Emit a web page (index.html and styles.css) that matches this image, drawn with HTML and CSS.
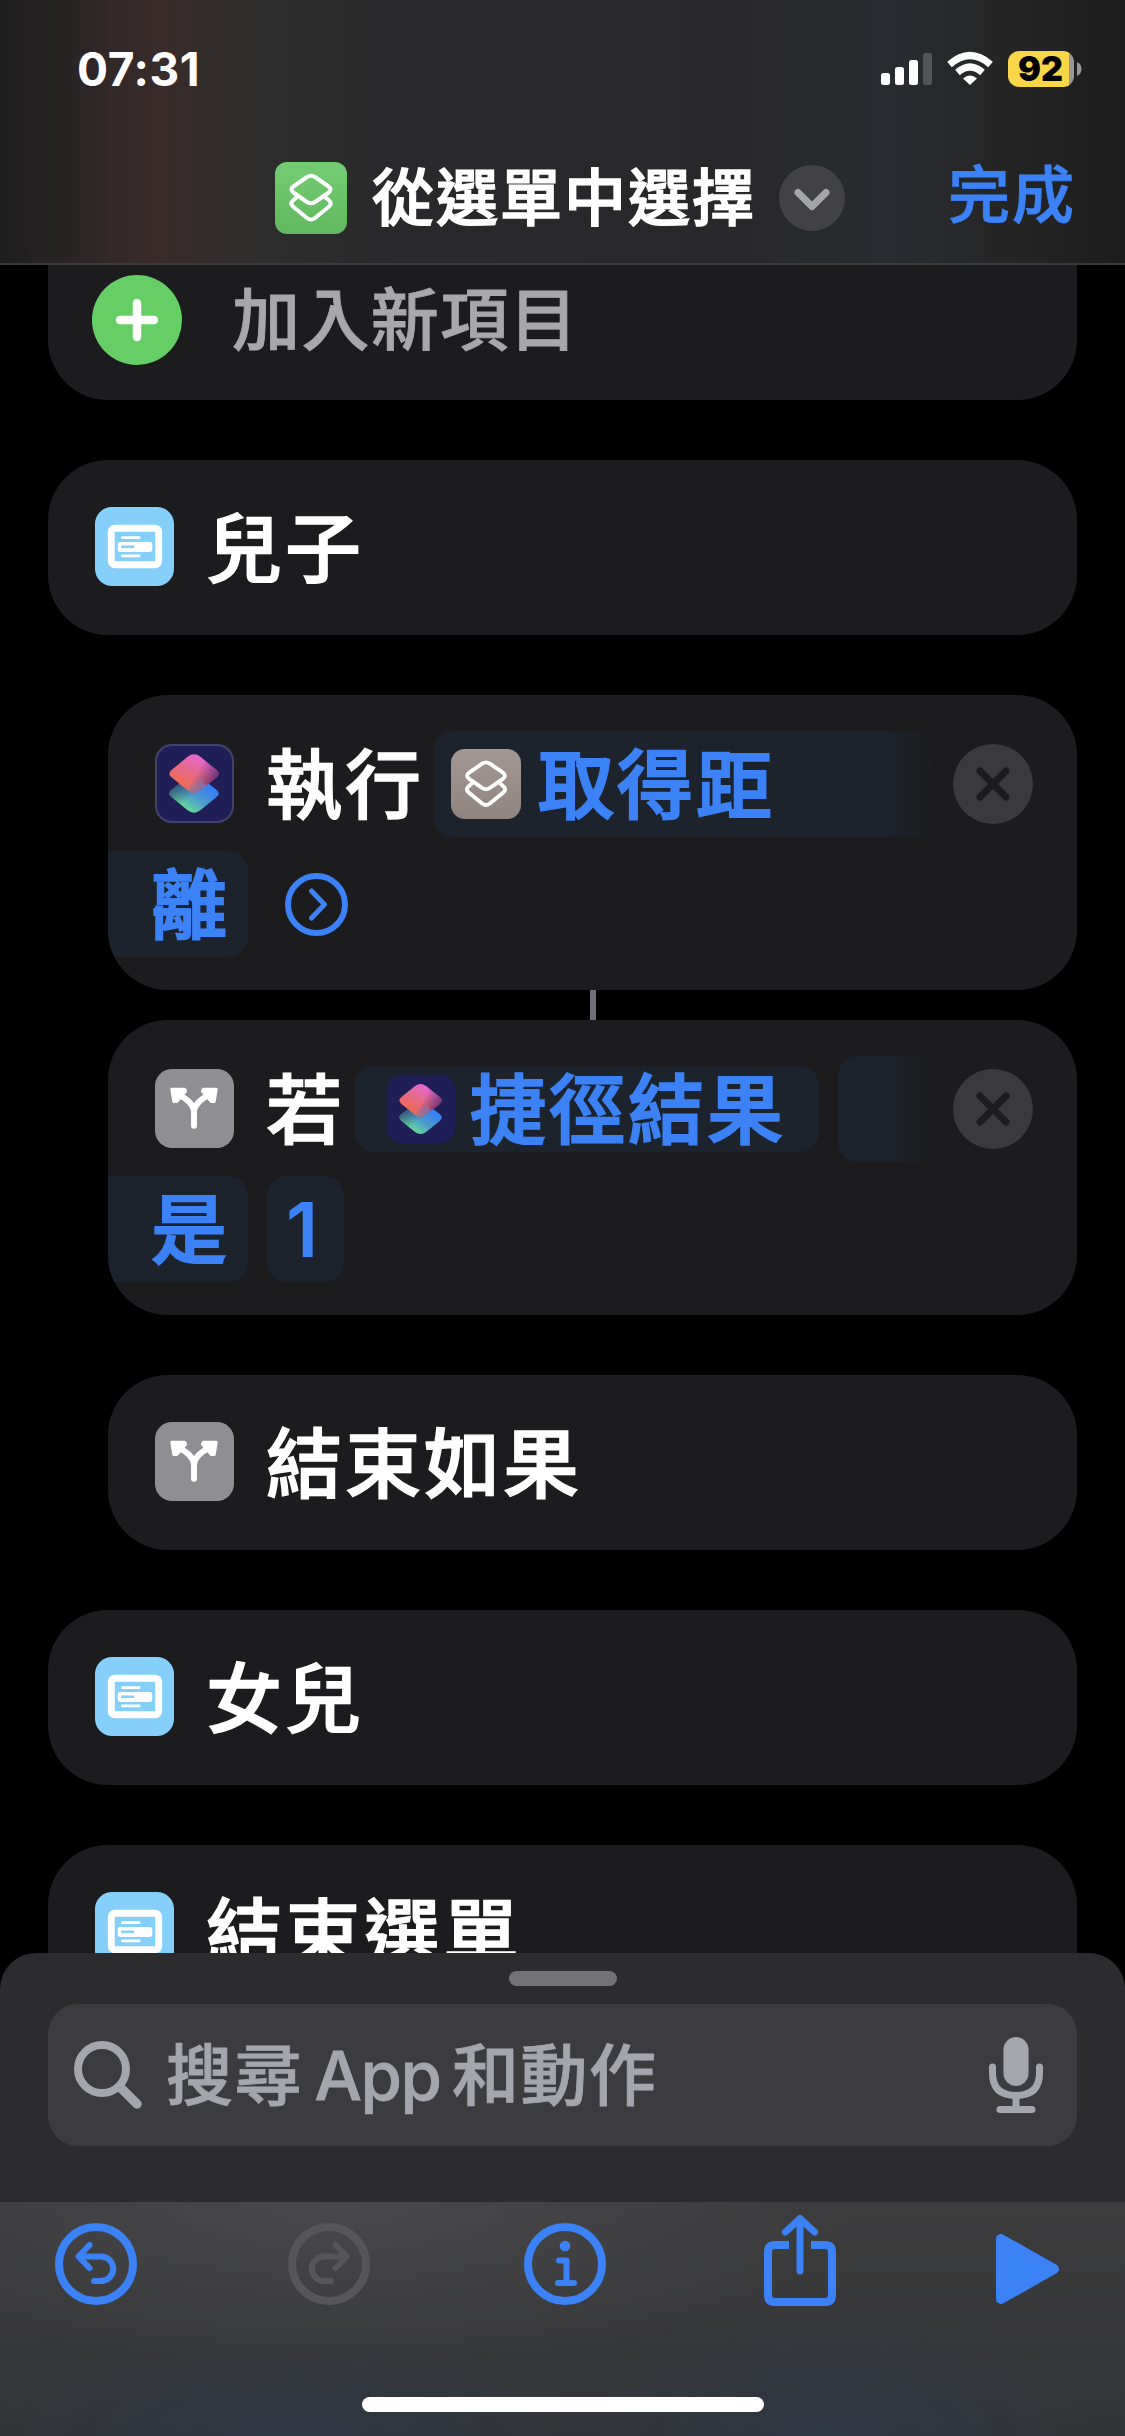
FILE: index.html
```html
<!DOCTYPE html>
<html lang="zh-Hant">
<head>
    <meta charset="UTF-8">
    <meta name="viewport" content="width=device-width, initial-scale=1.0">
    <title>從選單中選擇</title>
    <link rel="stylesheet" href="styles.css">
</head>
<body>
    <!-- shared icons -->
    <svg class="defs" width="0" height="0">
        <defs>
            <linearGradient id="pink" gradientUnits="userSpaceOnUse" x1="46" y1="10" x2="30" y2="44">
                <stop offset="0" stop-color="#e468dc"/>
                <stop offset="0.55" stop-color="#e66a86"/>
                <stop offset="1" stop-color="#f06a50"/>
            </linearGradient>
            <linearGradient id="shade" gradientUnits="userSpaceOnUse" x1="44" y1="26" x2="62" y2="36">
                <stop offset="0" stop-color="#5c2a6c" stop-opacity="0"/>
                <stop offset="1" stop-color="#5c2a6c" stop-opacity="0.85"/>
            </linearGradient>
            <linearGradient id="tip" gradientUnits="userSpaceOnUse" x1="38" y1="36" x2="47" y2="48">
                <stop offset="0" stop-color="#7a86c0" stop-opacity="0"/>
                <stop offset="1" stop-color="#6a88d0" stop-opacity="0.8"/>
            </linearGradient>
            <linearGradient id="blue" gradientUnits="userSpaceOnUse" x1="54" y1="44" x2="36" y2="70">
                <stop offset="0" stop-color="#3580f4"/>
                <stop offset="0.5" stop-color="#4c9ccc"/>
                <stop offset="1" stop-color="#68da98"/>
            </linearGradient>
            <linearGradient id="shade2" gradientUnits="userSpaceOnUse" x1="34" y1="56" x2="22" y2="40">
                <stop offset="0" stop-color="#2c4668" stop-opacity="0"/>
                <stop offset="1" stop-color="#2c4668" stop-opacity="0.85"/>
            </linearGradient>
        </defs>
        <symbol id="layers" viewBox="0 0 72 72">
            <g fill="none" stroke="#fff" stroke-width="4" stroke-linejoin="round">
                <path d="M32 15 L19 24 Q14 27.500 19 31 L32 40 Q36 42.500 40 40 L53 31 Q58 27.500 53 24 L40 15 Q36 12.500 32 15Z"/>
                <path d="M22 35 L18.500 38 Q14 41.500 18.500 45 L32 56 Q36 59 40 56 L53.500 45 Q58 41.500 53.500 38 L50 35"/>
            </g>
        </symbol>
        <symbol id="shortcuts" viewBox="0 0 80 80">
            <path id="low" d="M33 34 Q39.500 29 46 34 L62 46 Q67 50 62 54 L46 67 Q39.500 72 33 67 L17 54 Q12 50 17 46Z" fill="url(#blue)"/>
            <path d="M33 34 Q39.500 29 46 34 L62 46 Q67 50 62 54 L46 67 Q39.500 72 33 67 L17 54 Q12 50 17 46Z" fill="url(#shade2)"/>
            <path d="M33 13 Q39.500 8 46 13 L62 26 Q67 30 62 34 L46 47 Q39.500 52 33 47 L17 34 Q12 30 17 26Z" fill="url(#pink)"/>
            <path d="M33 13 Q39.500 8 46 13 L62 26 Q67 30 62 34 L46 47 Q39.500 52 33 47 L17 34 Q12 30 17 26Z" fill="url(#shade)"/>
            <path d="M46 47 Q39.500 52 33 47 L28 43 L46 34 L52 42Z" fill="url(#tip)"/>
        </symbol>
        <symbol id="menu" viewBox="0 0 80 80">
            <rect x="16.500" y="21.500" width="48" height="37" rx="3.500" fill="none" stroke="#fff" stroke-width="7"/>
            <rect x="26.500" y="29.500" width="19.500" height="3" rx="1" fill="#fff"/>
            <rect x="23" y="35.500" width="35" height="10" rx="2.500" fill="#fff"/>
            <rect x="26.500" y="39" width="13" height="2.600" fill="#84d0fb"/>
            <rect x="26.500" y="48" width="19.500" height="3" rx="1" fill="#fff"/>
        </symbol>
        <symbol id="branch" viewBox="0 0 80 80">
            <path d="M39.500 57.500V43Q39 34 24 26M39.500 43Q40 34 55 26" fill="none" stroke="#fff" stroke-width="6" stroke-linecap="round"/>
            <path d="M17 20.500L30 20.500L31 22.500L22 33L19 33Z M62 20.500L49 20.500L48 22.500L57 33L60 33Z" fill="#fff" stroke="#fff" stroke-width="3" stroke-linejoin="round"/>
        </symbol>
        <symbol id="cross" viewBox="0 0 80 80">
            <circle cx="40" cy="40" r="40" fill="#3a3a3d"/>
            <path d="M27 27L53 53M53 27L27 53" stroke="#1c1c1e" stroke-width="7" stroke-linecap="round"/>
        </symbol>
    </svg>

    <div class="phone">
        <header class="top">
            <div class="status">
                <span class="time">07:31</span>
                <div class="status-icons">
                    <svg width="52" height="36" viewBox="0 0 52 36">
                        <g fill="#fff">
                            <rect x="0" y="22" width="9" height="12" rx="2.500"/>
                            <rect x="14" y="16" width="9" height="18" rx="2.500"/>
                            <rect x="28" y="9" width="9" height="25" rx="2.500"/>
                            <rect x="42" y="2" width="9" height="32" rx="2.500" fill="#545458"/>
                        </g>
                    </svg>
                    <svg class="wifi" width="46" height="36" viewBox="0 0 46 36">
                        <g fill="none" stroke="#fff" stroke-width="7">
                            <path d="M2.500 13.500Q23 -4.500 43.500 13.500"/>
                            <path d="M10.500 21.500Q23 10.500 35.500 21.500"/>
                        </g>
                        <path d="M16 27.500Q23 21.500 30 27.500L23 34Z" fill="#fff"/>
                    </svg>
                    <div class="battery">92</div>
                    <svg width="5" height="14" viewBox="0 0 5 14"><path d="M0 0Q4.500 2 4.500 7T0 14Z" fill="#98989a"/></svg>
                </div>
            </div>
            <div class="nav">
                <svg class="title-icon" viewBox="0 0 72 72"><use href="#layers"/></svg>
                <h1 class="title">從選單中選擇</h1>
                <svg class="chevron" viewBox="0 0 66 66">
                    <circle cx="33" cy="33" r="33" fill="#424246"/>
                    <path d="M19 27.500L33 41.500L47 27.500" fill="none" stroke="#a5a5ac" stroke-width="7" stroke-linecap="round" stroke-linejoin="round"/>
                </svg>
                <a class="done">完成</a>
            </div>
        </header>

        <main class="list">
            <div class="card add">
                <svg class="plus" viewBox="0 0 90 90">
                    <circle cx="45" cy="45" r="45" fill="#65cf66"/>
                    <path d="M45 28V62M28 45H62" stroke="#fff" stroke-width="8.500" stroke-linecap="round"/>
                </svg>
                <span class="add-text">加入新項目</span>
            </div>

            <div class="card">
                <svg class="icon sky" viewBox="0 0 80 80"><use href="#menu"/></svg>
                <span class="text">兒子</span>
            </div>

            <div class="card inner tall">
                <div class="line">
                    <svg class="icon navy" viewBox="0 0 80 80"><use href="#shortcuts"/></svg>
                    <span class="text">執行</span>
                    <div class="token fade run">
                        <svg class="mini beige" viewBox="0 0 72 72"><use href="#layers"/></svg>
                        <span class="label">取得距</span>
                    </div>
                    <svg class="close" viewBox="0 0 80 80"><use href="#cross"/></svg>
                </div>
                <div class="line second">
                    <div class="token edge"><span class="label">離</span></div>
                    <svg class="more" viewBox="0 0 63 63">
                        <circle cx="31.500" cy="31.500" r="28.500" fill="none" stroke="#3b82f7" stroke-width="6"/>
                        <path d="M26.500 18L39.500 31.500L26.500 45" fill="none" stroke="#3b82f7" stroke-width="5" stroke-linecap="round" stroke-linejoin="round"/>
                    </svg>
                </div>
            </div>

            <div class="connector"></div>

            <div class="card inner tall">
                <div class="line">
                    <svg class="icon gray" viewBox="0 0 80 80"><use href="#branch"/></svg>
                    <span class="text">若</span>
                    <div class="token result">
                        <svg class="mini navy" viewBox="0 0 80 80"><use href="#shortcuts"/></svg>
                        <span class="label">捷徑結果</span>
                    </div>
                    <div class="token fade rest"></div>
                    <svg class="close" viewBox="0 0 80 80"><use href="#cross"/></svg>
                </div>
                <div class="line second">
                    <div class="token edge"><span class="label">是</span></div>
                    <div class="token one">1</div>
                </div>
            </div>

            <div class="card inner">
                <svg class="icon gray" viewBox="0 0 80 80"><use href="#branch"/></svg>
                <span class="text">結束如果</span>
            </div>

            <div class="card">
                <svg class="icon sky" viewBox="0 0 80 80"><use href="#menu"/></svg>
                <span class="text">女兒</span>
            </div>

            <div class="card">
                <svg class="icon sky" viewBox="0 0 80 80"><use href="#menu"/></svg>
                <span class="text">結束選單</span>
            </div>
        </main>

        <section class="sheet">
            <div class="handle"></div>
            <div class="search">
                <svg class="lens" viewBox="0 0 68 68">
                    <circle cx="28" cy="28" r="24" fill="none" stroke="#a5a5ad" stroke-width="8"/>
                    <path d="M46 46L63 63" stroke="#a5a5ad" stroke-width="9.500" stroke-linecap="round"/>
                </svg>
                <span class="placeholder">搜尋 <span class="latin">App</span> 和動作</span>
                <svg class="mic" viewBox="0 0 54 76">
                    <rect x="14.500" y="0" width="25" height="49" rx="12.500" fill="#a5a5ad"/>
                    <path d="M3.500 30V36Q3.500 58.500 27 58.500T50.500 36V30M27 59V70M11 72.500H43" fill="none" stroke="#a5a5ad" stroke-width="7" stroke-linecap="round"/>
                </svg>
            </div>
        </section>

        <footer class="toolbar">
            <svg class="tool undo" viewBox="0 0 82 82">
                <circle cx="41" cy="41" r="37" fill="none" stroke="#3b82f7" stroke-width="8"/>
                <path d="M34.500 22L23.500 33.500L34.500 45M24.500 33.500H46A12.200 12.200 0 0 1 46 58H39" fill="none" stroke="#3b82f7" stroke-width="6" stroke-linecap="round" stroke-linejoin="round"/>
            </svg>
            <svg class="tool redo" viewBox="0 0 82 82">
                <circle cx="41" cy="41" r="37" fill="none" stroke="#565659" stroke-width="8"/>
                <path d="M47.500 22L58.500 33.500L47.500 45M57.500 33.500H36A12.200 12.200 0 0 0 36 58H43" fill="none" stroke="#565659" stroke-width="6" stroke-linecap="round" stroke-linejoin="round"/>
            </svg>
            <svg class="tool info" viewBox="0 0 82 82">
                <circle cx="41" cy="41" r="37" fill="none" stroke="#3b82f7" stroke-width="8"/>
                <circle cx="41" cy="23" r="5.300" fill="#3b82f7"/>
                <path d="M35 37.500H42.500V60M34 60H50" fill="none" stroke="#3b82f7" stroke-width="6" stroke-linecap="round" stroke-linejoin="round"/>
            </svg>
            <svg class="share" viewBox="0 0 72 91">
                <path d="M25 30H11Q4 30 4 37V80Q4 87 11 87H61Q68 87 68 80V37Q68 30 61 30H47" fill="none" stroke="#3b82f7" stroke-width="8"/>
                <path d="M36 56V4.500M21.500 17L36 3.500L50.500 17" fill="none" stroke="#3b82f7" stroke-width="7" stroke-linecap="round" stroke-linejoin="round"/>
            </svg>
            <svg class="play" viewBox="0 0 64 70">
                <path d="M5 5V65L58 35Z" fill="#3b82f7" stroke="#3b82f7" stroke-width="10" stroke-linejoin="round"/>
            </svg>
        </footer>
        <div class="home"></div>
    </div>
</body>
</html>
```
FILE: styles.css
```css
* {
    box-sizing: border-box;
}

body {
    margin: 0;
    background-color: #000;
    color: #fff;
    font-family: Inter, "Noto Sans CJK TC", sans-serif;
}

svg {
    display: block;
    flex-shrink: 0;
}

.defs {
    position: absolute;
}

.phone {
    position: relative;
    display: flex;
    flex-direction: column;
    width: 1125px;
    height: 2436px;
    overflow: hidden;
}

/* top bar */
.top {
    height: 265px;
    flex-shrink: 0;
    border-bottom: 2px solid #3a3a3c;
    background: linear-gradient(90deg, #1f1f20 0, #252222 50px, #322828 110px, #392b2a 160px, #322c2b 205px, #2d2d2d 270px, #29292b 400px, #28282a 740px, #282b30 890px, #262627 990px, #1d1d1e 1125px);
}

.status {
    display: flex;
    justify-content: space-between;
    padding: 51px 43px 0 77px;
    height: 140px;
}

.time {
    font-size: 46px;
    font-weight: 700;
    line-height: 37px;
    letter-spacing: 0.6px;
}

.status-icons {
    display: flex;
    height: 36px;
    align-items: center;
}

.wifi {
    margin: 0 15px 0 14px;
}

.battery {
    width: 66px;
    height: 36px;
    margin-right: 3px;
    padding-right: 1px;
    border-radius: 11px;
    background: linear-gradient(90deg, #f8d648 61px, #98989a 61px);
    color: #000;
    font-size: 34px;
    font-weight: 900;
    line-height: 36px;
    text-align: center;
}

.nav {
    display: flex;
    align-items: center;
    height: 116px;
    padding: 0 49px 0 275px;
}

.title-icon {
    width: 72px;
    height: 72px;
    border-radius: 12px;
    background: linear-gradient(#74cc74, #60b95e);
}

.title {
    width: 406px;
    margin: 0;
    padding: 2px 0 0 25px;
    font-size: 62px;
    font-weight: 500;
    -webkit-text-stroke: 1.5px currentColor;
    letter-spacing: 2px;
    line-height: 72px;
    white-space: nowrap;
}

.chevron {
    width: 66px;
    height: 66px;
    margin-left: 26px;
}

.done {
    margin-left: auto;
    margin-top: -5px;
    color: #3b82f7;
    font-size: 62px;
    font-weight: 500;
    -webkit-text-stroke: 0.8px currentColor;
    letter-spacing: 2px;
    line-height: 72px;
}

/* actions */
.list {
    display: flex;
    flex-direction: column;
    gap: 60px;
    padding: 0 48px;
}

.card {
    display: flex;
    align-items: center;
    flex-shrink: 0;
    height: 175px;
    padding: 0 46px;
    border-radius: 60px;
    background-color: #1c1c1e;
    overflow: hidden;
}

.card.add {
    height: 135px;
    padding: 0 44px 25px;
    border-radius: 0 0 60px 60px;
}

.plus {
    width: 90px;
    height: 90px;
}

.add-text {
    margin-left: 50px;
    color: #a8a8aa;
    font-size: 68px;
    letter-spacing: 1.4px;
    line-height: 90px;
    font-weight: 500;
    -webkit-text-stroke: 0.8px currentColor;
}

.icon {
    width: 79px;
    height: 79px;
    margin: -2px 0 0 1px;
    border-radius: 17px;
}

.sky {
    background-color: #84d0fb;
}

.gray {
    background-color: #8e8e93;
}

.navy {
    background-color: #1f1e57;
}

.icon.navy {
    box-shadow: inset 0 0 0 2px #43426a;
}

.beige {
    background: linear-gradient(#a39893, #8f847e);
}

.text {
    margin-left: 32px;
    padding-top: 2px;
    font-size: 76px;
    font-weight: 500;
    -webkit-text-stroke: 1.4px currentColor;
    letter-spacing: 3px;
    line-height: 80px;
    white-space: nowrap;
}

.inner {
    margin-left: 60px;
}

.tall {
    flex-direction: column;
    align-items: stretch;
    height: 295px;
    padding: 36px 44px 0 0;
}

.line {
    display: flex;
    align-items: center;
    height: 106px;
    padding-left: 46px;
}

.line.second {
    margin-top: 14px;
    padding-left: 0;
}

.token {
    display: flex;
    align-items: center;
    height: 106px;
    border-radius: 20px;
    background-color: #1c232c;
    color: #3b82f7;
    font-size: 76px;
    font-weight: 600;
    letter-spacing: 3px;
    line-height: 80px;
    white-space: nowrap;
}

.token .label {
    padding-top: 2px;
    font-weight: 500;
    -webkit-text-stroke: 2px currentColor;
}

.token.fade {
    border-radius: 20px 0 0 20px;
}

.run {
    width: 500px;
    margin-left: 9px;
    padding-left: 18px;
    background: linear-gradient(90deg, #1c232c 455px, #1c1c1e 500px);
}

.mini {
    width: 70px;
    height: 70px;
    margin-right: 17px;
    border-radius: 14px;
}

.close {
    width: 80px;
    height: 80px;
    margin: -1px 0 0 auto;
}

.edge {
    width: 140px;
    padding-left: 43px;
    border-radius: 0 20px 20px 0;
}

.more {
    width: 63px;
    height: 63px;
    margin-left: 37px;
}

.result {
    width: 465px;
    height: 86px;
    margin-left: 9px;
    padding-left: 33px;
}

.result .mini {
    width: 68px;
    height: 68px;
    margin-right: 15px;
}

.rest {
    width: 94px;
    margin-left: 19px;
    background: linear-gradient(90deg, #1c232c 50px, #1c1c1e 94px);
}

.one {
    width: 77px;
    margin-left: 19px;
    padding-left: 19px;
}

.connector {
    width: 6px;
    height: 30px;
    margin: -60px 0 -60px 542px;
    background-color: #6f6f75;
}

/* search sheet */
.sheet {
    position: absolute;
    top: 1953px;
    left: 0;
    width: 1125px;
    height: 249px;
    padding: 18px 48px 0;
    border-radius: 36px 36px 0 0;
    background-color: #2c2c2e;
}

.handle {
    width: 108px;
    height: 15px;
    margin: 0 auto 18px;
    border-radius: 8px;
    background-color: #727277;
}

.search {
    display: flex;
    align-items: center;
    height: 142px;
    padding: 0 34px 0 26px;
    border-radius: 30px;
    background-color: #3c3c40;
}

.lens {
    width: 68px;
    height: 68px;
}

.placeholder {
    margin: -9px 0 0 24px;
    color: #a5a5ad;
    font-size: 67px;
    font-weight: 500;
    -webkit-text-stroke: 0.8px currentColor;
    letter-spacing: 1.5px;
    white-space: nowrap;
    word-spacing: -8px;
}

.latin {
    letter-spacing: -1.4px;
}

.mic {
    width: 54px;
    height: 76px;
    margin-left: auto;
}

/* bottom toolbar */
.toolbar {
    position: absolute;
    top: 2202px;
    left: 0;
    display: flex;
    align-items: flex-start;
    width: 1125px;
    height: 234px;
    padding: 0 65px 0 55px;
    background:
        radial-gradient(ellipse 330px 110px at 290px 234px, rgba(45, 56, 72, 0.75), transparent),
        radial-gradient(ellipse 280px 130px at 830px 234px, rgba(45, 56, 72, 0.75), transparent),
        radial-gradient(ellipse 520px 170px at 340px 0, rgba(75, 75, 79, 0.8), transparent),
        linear-gradient(#3c3c3d, #333436);
}

.tool {
    width: 82px;
    height: 82px;
    margin-top: 21px;
}

.redo {
    margin-left: 151px;
}

.info {
    margin-left: 154px;
}

.share {
    width: 72px;
    height: 91px;
    margin: 13px 0 0 158px;
}

.play {
    width: 64px;
    height: 70px;
    margin: 32px 0 0 auto;
}

.home {
    position: absolute;
    left: 362px;
    bottom: 24px;
    width: 402px;
    height: 15px;
    border-radius: 8px;
    background-color: #fff;
}
```
